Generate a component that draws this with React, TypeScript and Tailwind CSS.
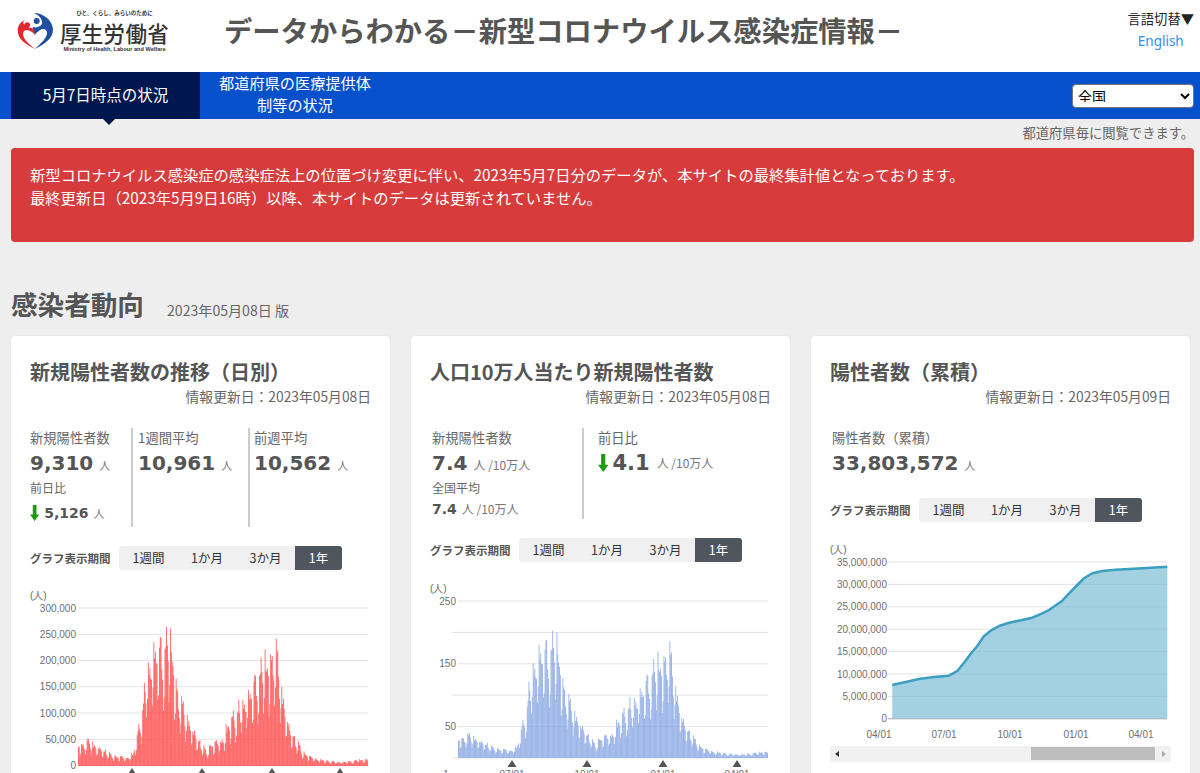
import React from "react";

const ENV: [number, number][] = [
  [0, 48], [0.04, 53], [0.06, 46], [0.11, 25], [0.165, 18], [0.19, 27], [0.2, 55], [0.22, 116], [0.235, 205], [0.25, 240], [0.27, 265],
  [0.31, 276], [0.325, 252], [0.35, 142], [0.375, 110], [0.395, 82], [0.42, 52], [0.445, 29], [0.455, 48], [0.49, 53], [0.51, 80],
  [0.545, 118], [0.565, 141], [0.59, 158], [0.62, 205], [0.65, 226], [0.678, 262], [0.695, 208], [0.712, 134], [0.73, 84], [0.75, 57],
  [0.775, 34], [0.8, 20], [0.86, 11], [0.915, 8.5], [0.96, 12.5], [1, 15.5],
];
const WEEK = [1, 0.92, 0.98, 0.84, 0.76, 0.48, 0.6];

function daily(): number[] {
  const out: number[] = [];
  for (let i = 0; i < 365; i++) {
    const t = i / 364;
    let v = 0;
    for (let j = 0; j < ENV.length - 1; j++) {
      if (t >= ENV[j][0] && t <= ENV[j + 1][0]) {
        const k = (t - ENV[j][0]) / (ENV[j + 1][0] - ENV[j][0]);
        v = ENV[j][1] + (ENV[j + 1][1] - ENV[j][1]) * k;
        break;
      }
    }
    const wobble = 0.9 + 0.1 * Math.sin(i * 12.9898 + Math.sin(i * 0.37) * 4);
    out.push(v * WEEK[(i + 3) % 7] * wobble);
  }
  return out;
}
const DATA = daily();

const axisFont = { fontFamily: "'Liberation Sans', sans-serif" };
const AXIS = "#707070";

function Triangle({ x, y }: { x: number; y: number }) {
  return <polygon points={`${x},${y} ${x - 4.5},${y + 7} ${x + 4.5},${y + 7}`} fill="#555" />;
}

function RedChart() {
  const base = 176, left = 48, right = 338, unit = 157.5 / 300;
  const step = (right - left) / 365;
  const labels = ["300,000", "250,000", "200,000", "150,000", "100,000", "50,000", "0"];
  return (
    <svg width="340" height="190" className="block" style={axisFont}>
      <text x="0" y="9" fontSize="10" fill="#666">(人)</text>
      {labels.map((l, i) => {
        const y = 18 + i * 26.25;
        return (
          <g key={l}>
            <line x1="48" x2="338" y1={y} y2={y} stroke="#e4e4e4" />
            <text x="46" y={y + 3.5} fontSize="10" textAnchor="end" fill={AXIS}>{l}</text>
          </g>
        );
      })}
      {DATA.map((v, i) => (
        <rect key={i} x={left + i * step} width={step * 0.98} y={base - v * unit} height={v * unit} fill="#ff4040" fillOpacity="0.92" />
      ))}
      {[102, 172, 242, 310].map((x) => <Triangle key={x} x={x} y={178} />)}
    </svg>
  );
}

function BlueChart() {
  const base = 178, left = 28, right = 338;
  const step = (right - left) / 365;
  const rows = ["250", "", "150", "", "50", ""];
  return (
    <svg width="340" height="205" className="block" style={axisFont}>
      <text x="0" y="12" fontSize="10" fill="#666">(人)</text>
      {rows.map((l, i) => {
        const y = 21 + i * 31.4;
        return (
          <g key={i}>
            <line x1={i % 2 ? 22 : 28} x2="338" y1={y} y2={y} stroke="#e4e4e4" />
            {l && <text x="26" y={y + 3.5} fontSize="10" textAnchor="end" fill={AXIS}>{l}</text>}
          </g>
        );
      })}
      {DATA.map((v, i) => (
        <rect key={i} x={left + i * step} width={step * 0.98} y={base - v * 0.48} height={v * 0.48} fill="#7e9fe0" fillOpacity="0.85" />
      ))}
      {[82, 157, 233, 307].map((x) => <Triangle key={x} x={x} y={180} />)}
      <text x="16" y="198" fontSize="10" textAnchor="middle" fill={AXIS}>1</text>
      {[["07/01", 82], ["10/01", 157], ["01/01", 233], ["04/01", 307]].map(([l, x]) => (
        <text key={l as string} x={x as number} y="198" fontSize="10" textAnchor="middle" fill={AXIS}>{l}</text>
      ))}
    </svg>
  );
}

const AREA_ZOOM: [number, number][] = [
  [250, 465], [290, 456], [330, 447], [375, 441], [420, 437], [445, 423], [465, 398], [490, 365], [505, 348], [525, 318], [545, 302],
  [570, 288], [600, 278], [640, 270], [670, 263], [700, 250], [720, 240], [760, 212], [785, 185], [805, 165], [825, 145], [850, 130],
  [880, 123], [920, 119], [1000, 115], [1075, 110],
];

function AreaChart() {
  const line = AREA_ZOOM.map(([x, y]) => `${(x / 3 - 21).toFixed(1)},${(y / 3 - 10).toFixed(1)}`).join(" ");
  const labels = ["35,000,000", "30,000,000", "25,000,000", "20,000,000", "15,000,000", "10,000,000", "5,000,000", "0"];
  return (
    <svg width="341" height="226" className="block" style={axisFont}>
      <text x="0" y="13" fontSize="10" fill="#666">(人)</text>
      {labels.map((l, i) => {
        const y = 22 + i * 22.4;
        return (
          <g key={l}>
            <line x1="58" x2="337" y1={y} y2={y} stroke={i === 7 ? "#aaa" : "#e4e4e4"} />
            <text x="57" y={y + 3.5} fontSize="10" textAnchor="end" fill={AXIS}>{l}</text>
          </g>
        );
      })}
      <polygon points={`${line} 337.3,178.5 62.3,178.5`} fill="#7fbfd6" fillOpacity="0.72" />
      <polyline points={line} fill="none" stroke="#3a9fc0" strokeWidth="2.5" strokeLinejoin="round" />
      {[["04/01", 49], ["07/01", 114], ["10/01", 180], ["01/01", 246], ["04/01", 311]].map(([l, x], i) => (
        <text key={i} x={x as number} y="198" fontSize="10" textAnchor="middle" fill={AXIS}>{l}</text>
      ))}
      <rect x="0" y="206" width="341" height="16" fill="#f1f1f1" />
      <rect x="201" y="207" width="124" height="13" fill="#bdbdbd" />
      <polygon points="5,214 9,211 9,217" fill="#333" />
      <polygon points="336,214 332,211 332,217" fill="#aaa" />
    </svg>
  );
}

function Logo() {
  return (
    <div className="flex items-start gap-[2px] pl-[14px] pt-[10px]">
      <svg width="44" height="44" viewBox="0 0 44 44" className="shrink-0">
        <path d="M20 3 C28 3 38 9 39 19 C39.5 28 31 34 21 39 C27 33 33 28 33 23 C33 19 29 18 26 20 C24 21.5 22 23 21 25 C20 22 19 19 18.5 17 C22 18 26 17 28 14 C29 10 25 5 20 3Z" fill="#1f4f9e" />
        <circle cx="22.7" cy="11" r="3" fill="#1f4f9e" />
        <path d="M11 10 C5 12 3 18 4 23 C5 30 13 35 21 39 C15 34 9 29 9 24 C9 20 13 19 16 21 C18 22 20 23 21 25 C20.5 22 20 19 18 18 C14 18 11 16 9 13 C9 12 10 11 11 10Z" fill="#e8262d" />
        <circle cx="13.3" cy="15" r="2.8" fill="#e8262d" />
      </svg>
      <div className="flex flex-col items-center text-[#333] -mt-[1px]">
        <div className="text-[5.5px] leading-[8px] font-bold whitespace-nowrap">ひと、くらし、みらいのために</div>
        <div className="text-[21.5px] leading-[24px] font-medium tracking-[0.3px] whitespace-nowrap mt-[4px]">厚生労働省</div>
        <div className="text-[5.6px] leading-[8px] font-bold whitespace-nowrap font-['Liberation_Sans',sans-serif]">Ministry of Health, Labour and Welfare</div>
      </div>
    </div>
  );
}

function Tabs() {
  return (
    <div className="flex items-center">
      <div className="w-[89px] text-[11.5px] font-bold text-[#555] leading-[24px] whitespace-nowrap">グラフ表示期間</div>
      <div className="flex h-[24px] w-[223px] text-[12.5px] leading-[23px] text-[#333] text-center">
        <div className="w-[59px] bg-[#f0f0f0] rounded-l-[3px]">1週間</div>
        <div className="w-[58px] bg-[#f0f0f0]">1か月</div>
        <div className="w-[59px] bg-[#f0f0f0]">3か月</div>
        <div className="w-[47px] bg-[#50565e] text-white rounded-r-[3px]">1年</div>
      </div>
    </div>
  );
}

function Arrow({ size }: { size: number }) {
  return (
    <svg width={size * 0.58} height={size} viewBox="0 0 10 16" preserveAspectRatio="none" className="inline-block">
      <path d="M3 0h4v9.5h3L5 16 0 9.5h3z" fill="#1f9a0f" />
    </svg>
  );
}

const label = "text-[13.3px] leading-[20px] text-[#666] whitespace-nowrap";
const big = "font-['DejaVu_Sans',sans-serif] font-bold text-[20px] leading-[30px] text-[#555]";
const unit = "text-[11px] text-[#777] ml-[6px] font-normal font-['Noto_Sans_CJK_JP',sans-serif]";
const unitWide = "text-[12px] text-[#777] ml-[6px] font-normal font-['Noto_Sans_CJK_JP',sans-serif]";

function Card({ title, date, children }: { title: string; date: string; children: React.ReactNode }) {
  return (
    <div className="bg-white rounded-[4px] shadow-[0_0_2px_rgba(0,0,0,0.08)] px-[19px] pt-[22px] pb-[40px]">
      <h2 className="text-[20px] leading-[28px] font-bold text-[#555] whitespace-nowrap">{title}</h2>
      <div className="text-[13.8px] leading-[18px] text-[#666] text-right mt-[1px]">情報更新日：{date}</div>
      {children}
    </div>
  );
}

export default function App() {
  return (
    <div className="h-[773px] overflow-hidden bg-[#eeeeee] font-['Noto_Sans_CJK_JP',sans-serif]">
      <header className="h-[72px] bg-white flex items-start relative">
        <div className="w-[224px] shrink-0"><Logo /></div>
        <h1 className="text-[28.3px] leading-[36px] font-bold text-[#555] whitespace-nowrap mt-[12px]">データからわかる－新型コロナウイルス感染症情報－</h1>
        <div className="absolute right-[6px] top-[9px] text-[13.3px] leading-[20px] text-[#222] text-center whitespace-nowrap">
          <div>言語切替▼</div>
          <div className="text-[#2f8ef5] text-[13.5px] font-['Noto_Sans',sans-serif] mt-[2px]">English</div>
        </div>
      </header>
      <nav className="h-[47px] bg-[#0650cc] flex items-stretch pl-[11px] pr-[6px]">
        <div className="relative w-[189px] bg-[#00164f] flex items-center justify-center text-white text-[15.5px] pb-[2px]">
          5月7日時点の状況
          <div className="absolute left-1/2 top-full w-0 h-0 -ml-[3px] border-x-[6px] border-x-transparent border-t-[6px] border-t-[#00164f]" />
        </div>
        <div className="w-[190px] flex items-center justify-center text-center text-white text-[15.2px] leading-[22px] pb-[5px]">
          都道府県の医療提供体<br />制等の状況
        </div>
        <div className="ml-auto flex items-center">
          <select defaultValue="全国" className="w-[122px] h-[24px] bg-white text-black text-[14px] rounded-[4px] border border-[#767676] pl-[1px] pb-[5px] appearance-auto">
            <option>全国</option>
          </select>
        </div>
      </nav>
      <div className="h-[29px] flex items-center justify-end pr-[6px] text-[13.3px] text-[#666] pb-[2px]">都道府県毎に閲覧できます。</div>
      <div className="ml-[11px] mr-[6px] h-[94px] bg-[#d83b3b] rounded-[4px] px-[19px] pt-[15px] text-white text-[15.3px] leading-[23px] whitespace-nowrap">
        <p>新型コロナウイルス感染症の感染症法上の位置づけ変更に伴い、2023年5月7日分のデータが、本サイトの最終集計値となっております。</p>
        <p>最終更新日（2023年5月9日16時）以降、本サイトのデータは更新されていません。</p>
      </div>
      <div className="flex items-end pl-[11px] mt-[43px] h-[38px]">
        <div className="text-[26.6px] leading-[38px] font-bold text-[#555] w-[156px]">感染者動向</div>
        <div className="text-[14.1px] leading-[26px] text-[#666]">2023年05月08日 版</div>
      </div>
      <div className="grid grid-cols-[379px_379px_379px] gap-[21px] pl-[11px] mt-[13px]">
        <Card title="新規陽性者数の推移（日別）" date="2023年05月08日">
          <div className="flex h-[99px] mt-[23px]">
            <div className="w-[101px] shrink-0">
              <div className={label}>新規陽性者数</div>
              <div className={big}>9,310<span className={unit}>人</span></div>
              <div className="text-[12px] leading-[16px] text-[#666]">前日比</div>
              <div className="flex items-center gap-[5px] mt-[6px] h-[22px]">
                <Arrow size={16} />
                <span className="font-['DejaVu_Sans',sans-serif] font-bold text-[14px] text-[#555]">5,126</span>
                <span className="text-[11px] text-[#777]">人</span>
              </div>
            </div>
            <div className="w-[2px] bg-[#cccccc]" />
            <div className="w-[115px] pl-[5px] shrink-0">
              <div className={label}>1週間平均</div>
              <div className={big}>10,961<span className={unit}>人</span></div>
            </div>
            <div className="w-[2px] bg-[#cccccc]" />
            <div className="pl-[4px]">
              <div className={label}>前週平均</div>
              <div className={big}>10,562<span className={unit}>人</span></div>
            </div>
          </div>
          <div className="mt-[19px]"><Tabs /></div>
          <div className="mt-[20px]"><RedChart /></div>
        </Card>
        <Card title="人口10万人当たり新規陽性者数" date="2023年05月08日">
          <div className="flex h-[91px] mt-[23px]">
            <div className="w-[152px] pl-[2px] shrink-0">
              <div className={label}>新規陽性者数</div>
              <div className={big}>7.4<span className={unitWide}>人 /10万人</span></div>
              <div className="text-[12px] leading-[16px] text-[#666]">全国平均</div>
              <div className="leading-[22px]">
                <span className="font-['DejaVu_Sans',sans-serif] font-bold text-[14px] text-[#555]">7.4</span>
                <span className="text-[12px] text-[#777] ml-[5px]">人 /10万人</span>
              </div>
            </div>
            <div className="w-[2px] bg-[#cccccc]" />
            <div className="pl-[14px]">
              <div className={label}>前日比</div>
              <div className={`${big} flex items-center gap-[4px]`}>
                <Arrow size={18} />
                <span className="text-[21px]">4.1</span>
                <span className="text-[12px] text-[#777] font-normal ml-[3px] font-['Noto_Sans_CJK_JP',sans-serif]">人 /10万人</span>
              </div>
            </div>
          </div>
          <div className="mt-[19px]"><Tabs /></div>
          <div className="mt-[18px]"><BlueChart /></div>
        </Card>
        <Card title="陽性者数（累積）" date="2023年05月09日">
          <div className="mt-[23px] h-[51px] pl-[2px]">
            <div className={label}>陽性者数（累積）</div>
            <div className={big}>33,803,572<span className={unit}>人</span></div>
          </div>
          <div className="mt-[19px]"><Tabs /></div>
          <div className="mt-[18px]"><AreaChart /></div>
        </Card>
      </div>
    </div>
  );
}
